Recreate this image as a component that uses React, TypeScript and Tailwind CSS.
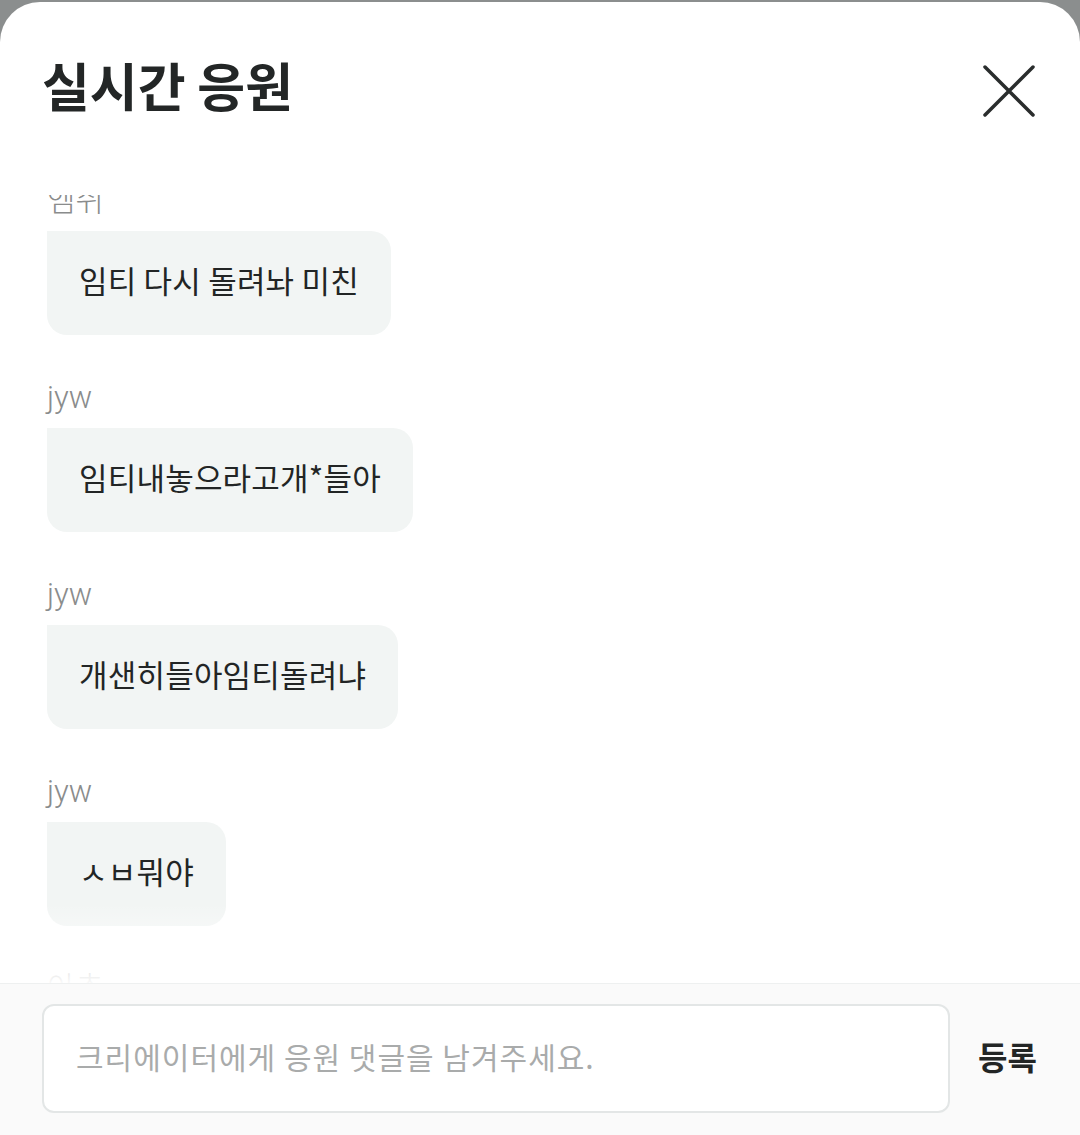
import React from 'react';

const font = { fontFamily: '"Noto Sans CJK KR", "Noto Sans", sans-serif' };

const comments = [
  { user: '엠쥐', text: '임티 다시 돌려놔 미친' },
  { user: 'jyw', text: '임티내놓으라고개*들아' },
  { user: 'jyw', text: '개샌히들아임티돌려냐' },
  { user: 'jyw', text: 'ㅅㅂ뭐야' },
  { user: '아츄', text: '임티 돌려줘' },
];

function CloseIcon() {
  return (
    <svg width="52" height="52" viewBox="0 0 52 52" fill="none">
      <path d="M2 2L50 50M50 2L2 50" stroke="#2a2d2d" strokeWidth="3.5" strokeLinecap="round" />
    </svg>
  );
}

export default function App() {
  return (
    <div className="w-[1080px] h-[1135px] bg-[#8b8e8e] pt-[2px] overflow-hidden" style={font}>
      <div className="h-[1133px] bg-white rounded-t-[40px] flex flex-col">
        {/* Header */}
        <div className="h-[193px] shrink-0 flex items-start justify-between pl-[42px] pr-[45px] pt-[55px]">
          <h1 className="text-[52px] leading-[56px] font-bold text-[#232626]">실시간 응원</h1>
          <button className="mt-[8px]">
            <CloseIcon />
          </button>
        </div>

        {/* Comment list */}
        <div className="relative flex-1 overflow-hidden">
          <div className="-mt-[12px] pl-[47px] flex flex-col">
            {comments.map((c, i) => (
              <div key={i} className="flex flex-col items-start pb-[45px]">
                <div
                  className="text-[31px] leading-[36px] text-[#8a8c8c] font-light"
                  style={{ fontFamily: 'Roboto, "Noto Sans CJK KR", sans-serif' }}
                >
                  {c.user}
                </div>
                <div className="mt-[12px] bg-[#f2f5f4] rounded-[20px] rounded-tl-none px-[32px] pt-[29px] pb-[35px] text-[31px] leading-[40px] tracking-[0.2px] text-[#222525]">
                  {c.text}
                </div>
              </div>
            ))}
          </div>
          <div className="absolute left-0 right-0 bottom-0 h-[80px] bg-gradient-to-b from-white/0 to-white/95" />
        </div>

        {/* Footer */}
        <div className="h-[152px] shrink-0 border-t border-[#eef0f0] bg-[#fafafa] flex items-center pl-[42px] pr-[43px] pb-[2px]">
          <div className="w-[908px] h-[109px] bg-white border-2 border-[#e3e6e6] rounded-[12px] flex items-center pl-[32px] pb-[5px]">
            <span className="text-[30px] text-[#a9abab] tracking-[1px]">크리에이터에게 응원 댓글을 남겨주세요.</span>
          </div>
          <button className="ml-auto text-[32px] font-bold text-[#222525] pb-[5px]">등록</button>
        </div>
      </div>
    </div>
  );
}
